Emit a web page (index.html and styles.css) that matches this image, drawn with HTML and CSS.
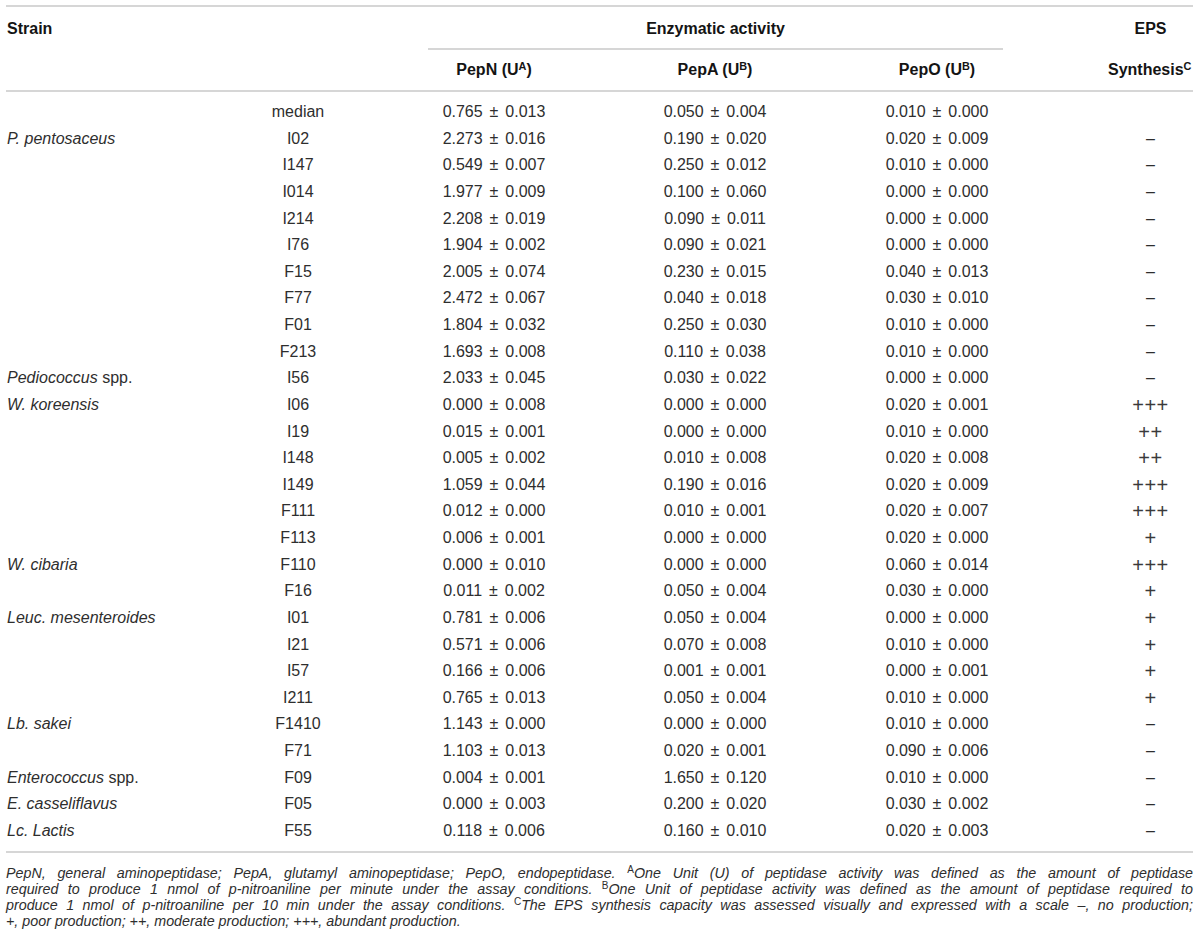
FILE: index.html
```html
<!DOCTYPE html>
<html lang="en">
<head>
<meta charset="utf-8">
<title>Enzymatic activity and EPS synthesis</title>
<link rel="stylesheet" href="styles.css">
</head>
<body>
<div class="page">
  <div class="thead">
    <div class="row hrow1">
      <div class="c1">Strain</div>
      <div class="c2"></div>
      <div class="enz"><span class="enz-label">Enzymatic activity</span></div>
      <div class="c6">EPS</div>
    </div>
    <div class="row hrow2">
      <div class="c1"></div>
      <div class="c2"></div>
      <div class="c3">PepN (U<sup>A</sup>)</div>
      <div class="c4">PepA (U<sup>B</sup>)</div>
      <div class="c5">PepO (U<sup>B</sup>)</div>
      <div class="c6">Synthesis<sup>C</sup></div>
    </div>
  </div>
  <div class="tbody">
    <div class="row"><div class="c1"></div><div class="c2">median</div><div class="c3">0.765 ± 0.013</div><div class="c4">0.050 ± 0.004</div><div class="c5">0.010 ± 0.000</div><div class="c6"></div></div>
    <div class="row"><div class="c1"><i>P. pentosaceus</i></div><div class="c2">I02</div><div class="c3">2.273 ± 0.016</div><div class="c4">0.190 ± 0.020</div><div class="c5">0.020 ± 0.009</div><div class="c6">–</div></div>
    <div class="row"><div class="c1"></div><div class="c2">I147</div><div class="c3">0.549 ± 0.007</div><div class="c4">0.250 ± 0.012</div><div class="c5">0.010 ± 0.000</div><div class="c6">–</div></div>
    <div class="row"><div class="c1"></div><div class="c2">I014</div><div class="c3">1.977 ± 0.009</div><div class="c4">0.100 ± 0.060</div><div class="c5">0.000 ± 0.000</div><div class="c6">–</div></div>
    <div class="row"><div class="c1"></div><div class="c2">I214</div><div class="c3">2.208 ± 0.019</div><div class="c4">0.090 ± 0.011</div><div class="c5">0.000 ± 0.000</div><div class="c6">–</div></div>
    <div class="row"><div class="c1"></div><div class="c2">I76</div><div class="c3">1.904 ± 0.002</div><div class="c4">0.090 ± 0.021</div><div class="c5">0.000 ± 0.000</div><div class="c6">–</div></div>
    <div class="row"><div class="c1"></div><div class="c2">F15</div><div class="c3">2.005 ± 0.074</div><div class="c4">0.230 ± 0.015</div><div class="c5">0.040 ± 0.013</div><div class="c6">–</div></div>
    <div class="row"><div class="c1"></div><div class="c2">F77</div><div class="c3">2.472 ± 0.067</div><div class="c4">0.040 ± 0.018</div><div class="c5">0.030 ± 0.010</div><div class="c6">–</div></div>
    <div class="row"><div class="c1"></div><div class="c2">F01</div><div class="c3">1.804 ± 0.032</div><div class="c4">0.250 ± 0.030</div><div class="c5">0.010 ± 0.000</div><div class="c6">–</div></div>
    <div class="row"><div class="c1"></div><div class="c2">F213</div><div class="c3">1.693 ± 0.008</div><div class="c4">0.110 ± 0.038</div><div class="c5">0.010 ± 0.000</div><div class="c6">–</div></div>
    <div class="row"><div class="c1"><i>Pediococcus</i> spp.</div><div class="c2">I56</div><div class="c3">2.033 ± 0.045</div><div class="c4">0.030 ± 0.022</div><div class="c5">0.000 ± 0.000</div><div class="c6">–</div></div>
    <div class="row"><div class="c1"><i>W. koreensis</i></div><div class="c2">I06</div><div class="c3">0.000 ± 0.008</div><div class="c4">0.000 ± 0.000</div><div class="c5">0.020 ± 0.001</div><div class="c6 plus">+++</div></div>
    <div class="row"><div class="c1"></div><div class="c2">I19</div><div class="c3">0.015 ± 0.001</div><div class="c4">0.000 ± 0.000</div><div class="c5">0.010 ± 0.000</div><div class="c6 plus">++</div></div>
    <div class="row"><div class="c1"></div><div class="c2">I148</div><div class="c3">0.005 ± 0.002</div><div class="c4">0.010 ± 0.008</div><div class="c5">0.020 ± 0.008</div><div class="c6 plus">++</div></div>
    <div class="row"><div class="c1"></div><div class="c2">I149</div><div class="c3">1.059 ± 0.044</div><div class="c4">0.190 ± 0.016</div><div class="c5">0.020 ± 0.009</div><div class="c6 plus">+++</div></div>
    <div class="row"><div class="c1"></div><div class="c2">F111</div><div class="c3">0.012 ± 0.000</div><div class="c4">0.010 ± 0.001</div><div class="c5">0.020 ± 0.007</div><div class="c6 plus">+++</div></div>
    <div class="row"><div class="c1"></div><div class="c2">F113</div><div class="c3">0.006 ± 0.001</div><div class="c4">0.000 ± 0.000</div><div class="c5">0.020 ± 0.000</div><div class="c6 plus">+</div></div>
    <div class="row"><div class="c1"><i>W. cibaria</i></div><div class="c2">F110</div><div class="c3">0.000 ± 0.010</div><div class="c4">0.000 ± 0.000</div><div class="c5">0.060 ± 0.014</div><div class="c6 plus">+++</div></div>
    <div class="row"><div class="c1"></div><div class="c2">F16</div><div class="c3">0.011 ± 0.002</div><div class="c4">0.050 ± 0.004</div><div class="c5">0.030 ± 0.000</div><div class="c6 plus">+</div></div>
    <div class="row"><div class="c1"><i>Leuc. mesenteroides</i></div><div class="c2">I01</div><div class="c3">0.781 ± 0.006</div><div class="c4">0.050 ± 0.004</div><div class="c5">0.000 ± 0.000</div><div class="c6 plus">+</div></div>
    <div class="row"><div class="c1"></div><div class="c2">I21</div><div class="c3">0.571 ± 0.006</div><div class="c4">0.070 ± 0.008</div><div class="c5">0.010 ± 0.000</div><div class="c6 plus">+</div></div>
    <div class="row"><div class="c1"></div><div class="c2">I57</div><div class="c3">0.166 ± 0.006</div><div class="c4">0.001 ± 0.001</div><div class="c5">0.000 ± 0.001</div><div class="c6 plus">+</div></div>
    <div class="row"><div class="c1"></div><div class="c2">I211</div><div class="c3">0.765 ± 0.013</div><div class="c4">0.050 ± 0.004</div><div class="c5">0.010 ± 0.000</div><div class="c6 plus">+</div></div>
    <div class="row"><div class="c1"><i>Lb. sakei</i></div><div class="c2">F1410</div><div class="c3">1.143 ± 0.000</div><div class="c4">0.000 ± 0.000</div><div class="c5">0.010 ± 0.000</div><div class="c6">–</div></div>
    <div class="row"><div class="c1"></div><div class="c2">F71</div><div class="c3">1.103 ± 0.013</div><div class="c4">0.020 ± 0.001</div><div class="c5">0.090 ± 0.006</div><div class="c6">–</div></div>
    <div class="row"><div class="c1"><i>Enterococcus</i> spp.</div><div class="c2">F09</div><div class="c3">0.004 ± 0.001</div><div class="c4">1.650 ± 0.120</div><div class="c5">0.010 ± 0.000</div><div class="c6">–</div></div>
    <div class="row"><div class="c1"><i>E. casseliflavus</i></div><div class="c2">F05</div><div class="c3">0.000 ± 0.003</div><div class="c4">0.200 ± 0.020</div><div class="c5">0.030 ± 0.002</div><div class="c6">–</div></div>
    <div class="row"><div class="c1"><i>Lc. Lactis</i></div><div class="c2">F55</div><div class="c3">0.118 ± 0.006</div><div class="c4">0.160 ± 0.010</div><div class="c5">0.020 ± 0.003</div><div class="c6">–</div></div>
  </div>
  <div class="note">
    <span class="line">PepN, general aminopeptidase; PepA, glutamyl aminopeptidase; PepO, endopeptidase. <sup>A</sup>One Unit (U) of peptidase activity was defined as the amount of peptidase</span>
    <span class="line">required to produce 1 nmol of p-nitroaniline per minute under the assay conditions. <sup>B</sup>One Unit of peptidase activity was defined as the amount of peptidase required to</span>
    <span class="line">produce 1 nmol of p-nitroaniline per 10 min under the assay conditions. <sup>C</sup>The EPS synthesis capacity was assessed visually and expressed with a scale –, no production;</span>
    <span class="line last">+, poor production; ++, moderate production; +++, abundant production.</span>
  </div>
</div>
</body>
</html>
```

FILE: styles.css
```css
html, body {
  margin: 0;
  padding: 0;
  background: #ffffff;
}

body {
  font-family: "Liberation Sans", Arial, Helvetica, sans-serif;
  color: #2e2e2e;
}

.page {
  width: 1187px;
  padding: 5px 7px 0 6px;
}

.row {
  display: grid;
  grid-template-columns: 194px 196px 196px 246px 198px 157px;
  align-items: center;
  font-size: 16px;
  line-height: 18px;
}

.row > div {
  text-align: center;
  white-space: nowrap;
}

.row > .c1 {
  text-align: left;
  padding-left: 1px;
}

.tbody .row > .c3,
.tbody .row > .c4,
.tbody .row > .c5 {
  word-spacing: 2.5px;
}

.row > .c6 {
  padding-left: 72px;
}

.row > .c6.plus {
  font-size: 20px;
  font-weight: 300;
  letter-spacing: 0.5px;
  line-height: 18px;
  color: #3a3a3a;
}

.thead {
  border-top: 2px solid #d6d6d6;
  border-bottom: 2px solid #d6d6d6;
  font-weight: bold;
  color: #141414;
}

.hrow1 {
  height: 43px;
  align-items: stretch;
}

.hrow1 > div {
  display: flex;
  align-items: center;
}

.hrow1 > .c6 {
  justify-content: center;
}

.hrow1 > .enz {
  grid-column: 3 / span 3;
  margin: 0 33px 0 32px;
  justify-content: center;
  border-bottom: 2px solid #d6d6d6;
  padding-top: 2px;
}

.hrow2 {
  height: 40px;
}

.hrow2 > .c6 {
  padding-right: 12px;
}

sup {
  font-size: 0.68em;
  line-height: 0;
  vertical-align: 0.5em;
  font-weight: inherit;
}

.tbody {
  padding: 6.7px 0 6.5px;
  border-bottom: 2px solid #d6d6d6;
}

.tbody .row {
  height: 26.63px;
}

.note {
  margin-top: 12px;
  font-size: 14.3px;
  line-height: 16px;
  font-style: italic;
  color: #2e2e2e;
  word-spacing: -1px;
}

.note .line {
  display: block;
  text-align: justify;
  text-align-last: justify;
}

.note .line.last {
  text-align-last: left;
  word-spacing: 0;
}

.note sup {
  font-style: normal;
  font-size: 0.7em;
}
```
